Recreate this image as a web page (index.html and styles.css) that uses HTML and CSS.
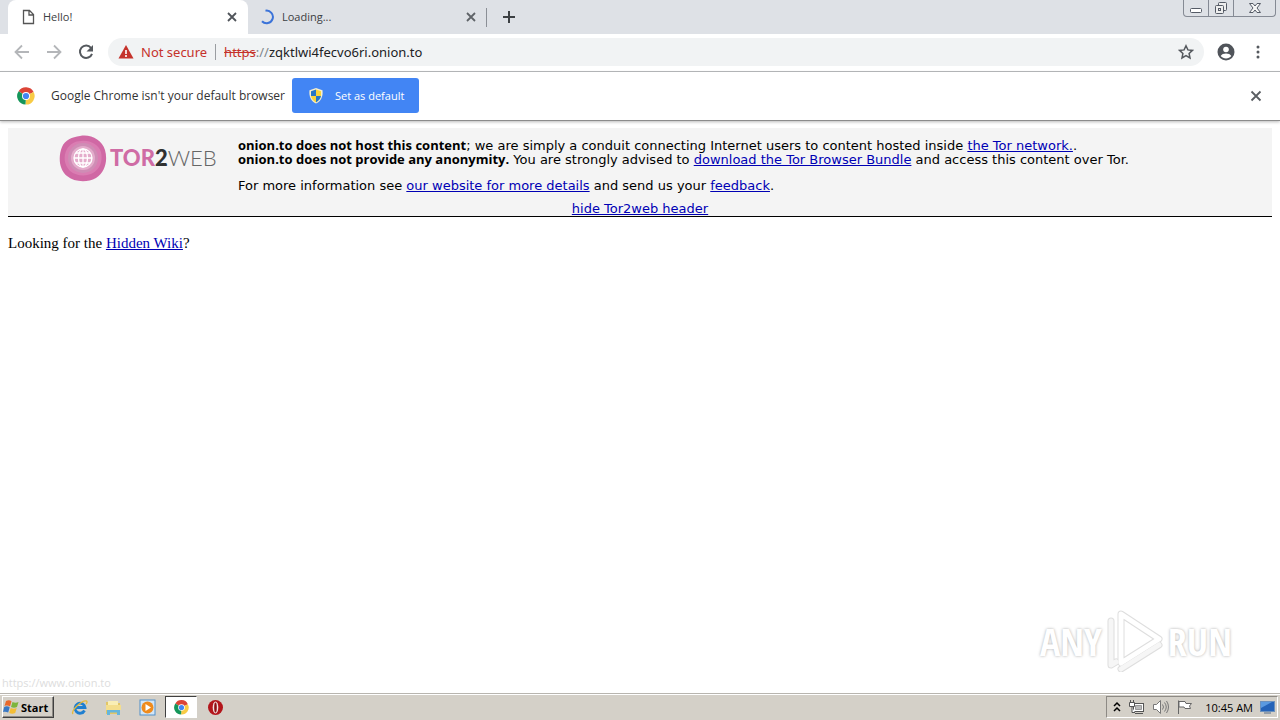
FILE: index.html
```html
<!DOCTYPE html>
<html lang="en">
<head>
<meta charset="utf-8">
<title>Hello!</title>
<link rel="stylesheet" href="styles.css">
</head>
<body>
<header class="tabstrip">
  <div class="tab tab-active">
    <svg class="tab-icon" viewBox="0 0 16 16" fill="none" stroke="#555" stroke-width="1.3"><path d="M3.5 1.5h6l4 4v9h-10zM9 1.5V6h4.500"/></svg>
    <span class="tab-title">Hello!</span>
    <button class="icon-button tab-close" aria-label="Close tab"><svg width="10" height="10" viewBox="0 0 10 10" stroke="#50545a" stroke-width="1.8"><path d="M1 1l8 8M9 1l-8 8"/></svg></button>
  </div>
  <div class="tab tab-idle">
    <svg class="tab-icon" viewBox="0 0 16 16" fill="none" stroke="#3b73d9" stroke-width="2"><path d="M6.500 1.700A6.300 6.300 0 1 1 3 12.200"/></svg>
    <span class="tab-title">Loading...</span>
    <button class="icon-button tab-close" aria-label="Close tab"><svg width="10" height="10" viewBox="0 0 10 10" stroke="#5f6368" stroke-width="1.8"><path d="M1 1l8 8M9 1l-8 8"/></svg></button>
  </div>
  <button class="icon-button new-tab" aria-label="New tab"><svg width="14" height="14" viewBox="0 0 14 14" stroke="#3c4043" stroke-width="2"><path d="M7 1v12M1 7h12"/></svg></button>
  <div class="window-controls">
    <button aria-label="Minimize"><svg width="14" height="16" viewBox="0 0 14 16" fill="#fff" stroke="#555b66"><rect x="1.500" y="8.500" width="11" height="4" rx="1"/></svg></button>
    <button aria-label="Restore"><svg width="14" height="16" viewBox="0 0 14 16" fill="#eee" stroke="#555b66"><rect x="4.500" y="2.500" width="8" height="8" rx="1"/><rect x="1.500" y="5.500" width="8" height="8" rx="1"/><rect x="4.500" y="8.500" width="2" height="2"/></svg></button>
    <button class="window-close" aria-label="Close"><svg width="14" height="16" viewBox="0 0 14 16" fill="#f6f6f6" stroke="#555b66"><path d="M1.500 3.500h3.500l2 2.500 2-2.500h3.500L9 8l3.500 4.500H9L7 10l-2 2.500H1.500L5 8z"/></svg></button>
  </div>
</header>

<nav class="toolbar">
  <button class="icon-button" aria-label="Back"><svg width="16" height="16" viewBox="0 0 16 16" fill="none" stroke="#b4b6b9" stroke-width="1.8"><path d="M15 8H2M8 1.500L1.500 8 8 14.500"/></svg></button>
  <button class="icon-button" aria-label="Forward"><svg width="16" height="16" viewBox="0 0 16 16" fill="none" stroke="#b4b6b9" stroke-width="1.800"><path d="M1 8h13M8 1.500L14.500 8 8 14.500"/></svg></button>
  <button class="icon-button" aria-label="Reload"><svg width="16" height="16" viewBox="0 0 16 16"><path d="M13 3.800A6.200 6.200 0 1 0 14 9.800" fill="none" stroke="#55595e" stroke-width="2"/><path d="M15 1v6.500H8.500z" fill="#55595e"/></svg></button>
  <div class="omnibox">
    <svg width="16" height="14" viewBox="0 0 16 14"><path d="M8 0l7.500 13.500H.5z" fill="#c5322b"/><path d="M8 5v4M8 10v2" stroke="#fff" stroke-width="1.600"/></svg>
    <span class="not-secure">Not secure</span>
    <span class="url"><s>https</s><span class="url-sep">://</span>zqktlwi4fecvo6ri.onion.to</span>
    <button class="icon-button" aria-label="Bookmark this page"><svg width="16" height="16" viewBox="0 0 16 16" fill="none" stroke="#55595e" stroke-width="1.500"><path d="M8 1.800l1.900 4.100 4.500.5-3.300 3.100.9 4.500L8 11.700 4 14l.9-4.500L1.600 6.400l4.500-.5z"/></svg></button>
  </div>
  <button class="icon-button" aria-label="Profile"><svg width="18" height="18" viewBox="0 0 18 18"><circle cx="9" cy="9" r="8.500" fill="#50545a"/><circle cx="9" cy="6.500" r="2.800" fill="#fff"/><path d="M3.700 13c1.600-3.300 9-3.300 10.600 0-2.500 3.200-8.100 3.200-10.600 0z" fill="#fff"/></svg></button>
  <button class="icon-button menu" aria-label="Menu"><svg width="4" height="14" viewBox="0 0 4 14" fill="#55595e"><circle cx="2" cy="2" r="1.500"/><circle cx="2" cy="7" r="1.500"/><circle cx="2" cy="12" r="1.500"/></svg></button>
</nav>

<section class="infobar">
  <svg width="18" height="18" viewBox="0 0 18 18"><path d="M9 9L1.600 4.300A8.500 8.500 0 0 1 16.600 5z" fill="#dc4437"/><path d="M9 9l7.600-4A8.500 8.500 0 0 1 8.500 17.500z" fill="#f8cb45"/><path d="M9 9l-.5 8.500A8.500 8.500 0 0 1 1.600 4.300z" fill="#15965a"/><circle cx="9" cy="9" r="4" fill="#fff"/><circle cx="9" cy="9" r="3.100" fill="#4285f4"/></svg>
  <span class="infobar-text">Google Chrome isn't your default browser</span>
  <button class="set-default">
    <svg width="16" height="16" viewBox="0 0 16 16"><path d="M8 0l6.500 2.200c.6 6-1 10.500-6.500 13.300C2.500 12.700.9 8.200 1.500 2.200z" fill="#f6efcf"/><path d="M8 1.500L3 3.200V8h5z" fill="#2677c5"/><path d="M8 1.500l5 1.700V8H8z" fill="#f8d43a"/><path d="M3 8h5v6.400C5 12.500 3.300 10.500 3 8z" fill="#f8d43a"/><path d="M13 8H8v6.400c3-1.900 4.700-3.900 5-6.400z" fill="#2677c5"/></svg>
    Set as default
  </button>
  <button class="icon-button infobar-close" aria-label="Dismiss"><svg width="12" height="12" viewBox="0 0 12 12" stroke="#5a5e63" stroke-width="1.800"><path d="M1.500 1.500l9 9M10.500 1.500l-9 9"/></svg></button>
</section>

<main class="page">
  <section class="notice">
    <div class="notice-body">
      <svg class="logo" width="158" height="47" viewBox="0 0 158 47">
        <path d="M21 1c11-2 22 4 25 14 3 11 0 22-9 28-9 5-22 4-29-2C0 34-1 22 3 12 6 5 13 2 21 1z" fill="#d068a4"/>
        <path d="M22 6c9-1 17 3 20 11 2 9-1 17-8 21-7 4-17 3-23-2-6-6-7-15-3-22 3-5 8-8 14-8z" fill="#da7db2"/>
        <circle cx="24" cy="23" r="15" fill="#cf8db5"/><circle cx="24" cy="23" r="12" fill="#e4accb"/>
        <g fill="none" stroke="#fff" stroke-width="1.300"><circle cx="24" cy="23" r="9"/><ellipse cx="24" cy="23" rx="4.500" ry="9"/><path d="M24 14v18M15 23h18M17 18h14M17 28h14"/></g>
        <text class="logo-name" x="51" y="31"><tspan class="logo-tor">TOR</tspan><tspan class="logo-two">2</tspan><tspan class="logo-web">WEB</tspan></text>
      </svg>
      <div class="notice-text">
        <p><b>onion.to does not host this content</b>; we are simply a conduit connecting Internet users to content hosted inside <a href="#">the Tor network.</a>.<br><b>onion.to does not provide any anonymity.</b> You are strongly advised to <a href="#">download the Tor Browser Bundle</a> and access this content over Tor.</p>
        <p>For more information see <a href="#">our website for more details</a> and send us your <a href="#">feedback</a>.</p>
      </div>
    </div>
    <a class="hide-link" href="#">hide Tor2web header</a>
  </section>
  <p class="question">Looking for the <a href="#">Hidden Wiki</a>?</p>
  <div class="status">https://www.onion.to</div>
  <div class="watermark">
    <span>ANY</span>
    <svg width="58" height="62" viewBox="0 0 58 62" fill="none" stroke-linejoin="round" stroke-linecap="round"><g stroke="#dedede" stroke-width="7"><path d="M15 4l38 25-38 24zM5 11v44l5-3M15 59l38-24"/></g><g stroke="#fff" stroke-width="5"><path d="M15 4l38 25-38 24z"/><path d="M5 11v44l5-3M15 59l38-24" stroke="#f6f6f6"/></g></svg>
    <span>RUN</span>
  </div>
</main>

<footer class="taskbar">
  <button class="start"><svg width="17" height="16" viewBox="0 0 17 16"><path d="M3 2c2-1 4-1 5.500.3L7 7.500C5.500 6.300 3.500 6.300 1.500 7z" fill="#e9692c"/><path d="M9.500 3c2 1 4 1 6 0L14 8c-2 1-4 1-6 0z" fill="#7db53c"/><path d="M1.200 8c2-1 4-.8 5.500.3L5.200 13.500c-2-1-3.500-1-5.200-.5z" fill="#3978c4"/><path d="M7.700 9c2 1 4 1 6 0l-1.500 5c-2 1-4 1-6 0z" fill="#f3bd35"/></svg>Start</button>
  <div class="launchers">
    <button class="launcher" aria-label="Internet Explorer"><svg width="17" height="17" viewBox="0 0 17 17" fill="none"><path d="M13.500 11.500A5 5 0 1 1 14 8.500H4.500" stroke="#1f7fd0" stroke-width="2.800"/><path d="M2 15C-1 12 11 1 15.500 2c1 .5.500 2-.5 3" stroke="#e6b93a" stroke-width="1.300"/></svg></button>
    <button class="launcher" aria-label="File Explorer"><svg width="17" height="17" viewBox="0 0 17 17"><path d="M1 3h5l1 1h8v11H1z" fill="#e2c667"/><path d="M3 2h10v5H3z" fill="#f9eeb5"/><path d="M1 6h15v5H1z" fill="#f4de8d"/><path d="M2 16v-5h13v5h-3v-2.500H5V16z" fill="#65b5dc"/></svg></button>
    <button class="launcher" aria-label="Media Player"><svg width="17" height="17" viewBox="0 0 17 17"><rect x="1" y="1" width="15" height="15" fill="#d3e6f7" stroke="#5190c9"/><circle cx="8.500" cy="8.500" r="6" fill="#ef8b1d"/><path d="M6.500 5l5.500 3.500L6.500 12z" fill="#fff"/></svg></button>
    <button class="launcher launcher-active" aria-label="Google Chrome"><svg width="15" height="15" viewBox="0 0 18 18"><path d="M9 9L1.600 4.300A8.500 8.500 0 0 1 16.600 5z" fill="#dc4437"/><path d="M9 9l7.600-4A8.500 8.500 0 0 1 8.500 17.500z" fill="#f8cb45"/><path d="M9 9l-.5 8.500A8.500 8.500 0 0 1 1.600 4.300z" fill="#15965a"/><circle cx="9" cy="9" r="4" fill="#fff"/><circle cx="9" cy="9" r="3.100" fill="#4285f4"/></svg></button>
    <button class="launcher" aria-label="Opera"><svg width="17" height="17" viewBox="0 0 17 17"><circle cx="8.500" cy="8.500" r="7.500" fill="#b3151b"/><ellipse cx="8.500" cy="8.500" rx="2.800" ry="6" fill="#f4e4e4"/><ellipse cx="8.500" cy="8.500" rx="1.300" ry="5" fill="#8e1014"/></svg></button>
  </div>
  <div class="tray">
    <svg width="8" height="12" viewBox="0 0 8 12" fill="none" stroke="#000" stroke-width="1.500"><path d="M1 5l3-3 3 3M1 10l3-3 3 3"/></svg>
    <svg width="17" height="16" viewBox="0 0 17 16" fill="#fff" stroke="#555"><rect x="5.500" y="4.500" width="10" height="8"/><path d="M7.500 6.500h6v4h-6z" fill="#bbb" stroke="#999"/><path d="M7 14.500h8M1.500 3.500h5v4h-5zM2.500 1v2M5.500 1v2M4 8v5.500h3"/></svg>
    <svg width="17" height="16" viewBox="0 0 17 16" fill="#fff" stroke="#777"><path d="M1.500 5.500h3l4-4v13l-4-4h-3z"/><path d="M10.500 5.500q2 2.500 0 5M12.500 3.500q3.500 4.500 0 9M14.500 2q4 6 0 12" fill="none"/></svg>
    <svg width="17" height="16" viewBox="0 0 17 16" fill="#fff" stroke="#666"><path d="M2.500 15V1.500M3 2.500h6l1 2h5.500l-2 2.500 1 2.500H9l-1-1.500H3z"/></svg>
    <span class="clock">10:45 AM</span>
    <svg width="15" height="14" viewBox="0 0 15 14"><rect x=".5" y="1.500" width="14" height="10" fill="#2563b8" stroke="#6c91bd"/><path d="M1 2h11L1 8z" fill="#5b9ae0"/><path d="M4 13h7" stroke="#526b88"/></svg>
  </div>
</footer>
</body>
</html>
```
FILE: styles.css
```css
* { box-sizing: border-box; }
body {
  margin: 0;
  min-height: 100vh;
  display: flex;
  flex-direction: column;
  background: #fff;
  color: #000;
  font-family: "Open Sans", "Noto Sans", sans-serif;
}
button {
  margin: 0;
  padding: 0;
  border: 0;
  background: none;
  font: inherit;
  color: inherit;
}
svg { display: block; flex: none; }
p { margin: 0; }
a { color: #0000b4; }

.icon-button { display: flex; align-items: center; justify-content: center; flex: none; }

.tabstrip { display: flex; height: 34px; padding-left: 8px; background: #dee1e6; }
.tab { display: flex; align-items: center; width: 240px; padding: 0 11px 0 12px; font-size: 11px; line-height: 14px; color: #3c4043; }
.tab-active { background: #fff; border-radius: 8px 8px 0 0; }
.tab-idle { width: 239px; padding-left: 11px; background: linear-gradient(#8b8f96, #8b8f96) right center / 1px 19px no-repeat; }
.tab-icon { width: 16px; height: 16px; }
.tab-title { flex: 1; margin-left: 7px; }
.tab-close { width: 10px; height: 16px; }
.new-tab { width: 44px; }
.window-controls { display: flex; height: 17px; margin-left: auto; margin-right: 4px; border: 1px solid #858a94; border-top: 0; border-radius: 0 0 4px 4px; }
.window-controls button { display: flex; align-items: center; justify-content: center; width: 25px; border-right: 1px solid #858a94; }
.window-controls .window-close { width: 41px; border-right: 0; }

.toolbar { display: flex; align-items: center; height: 38px; padding: 0 20px 2px 14px; gap: 16px; border-bottom: 1px solid #b0b2b5; }
.omnibox { display: flex; align-items: center; flex: 1; height: 28px; margin-left: -2px; margin-right: -3px; padding: 0 10px; border-radius: 14px; background: #f1f3f4; font-family: "Noto Sans", sans-serif; font-size: 13px; color: #202124; }
.not-secure { margin-left: 7px; padding-right: 8px; border-right: 1px solid #9a9da1; line-height: 16px; color: #c5322b; }
.url { flex: 1; margin-left: 8px; }
.url s { color: #c5322b; }
.url-sep { color: #80868b; }
.menu { margin-left: 5px; }

.infobar { display: flex; align-items: center; height: 49px; padding: 0 18px 1px 17px; border-bottom: 1px solid #8c8c8c; box-shadow: 0 1px 3px #bbb; font-size: 12px; color: #333; }
.infobar-text { margin-left: 16px; }
.set-default { display: flex; align-items: center; gap: 11px; width: 127px; height: 35px; margin-left: 7px; padding-left: 16px; border-radius: 3px; background: #4285f4; color: #fff; font-size: 11px; }
.infobar-close { margin-left: auto; }

.page { position: relative; flex: 1; padding: 7px 8px; }
.notice { display: flex; flex-direction: column; background: #f4f4f4; border-bottom: 1px solid #000; font: 13px/14px "DejaVu Sans", sans-serif; }
.notice b { font-family: "Open Sans", "Noto Sans", sans-serif; line-height: 1; }
.notice-body { display: flex; padding: 7px 0 0 51px; }
.notice-text { margin-left: 21px; padding-top: 4px; }
.notice-text p { margin-bottom: 12px; }
.notice-text p + p { margin-bottom: 9px; }
.hide-link { align-self: center; }
.logo-name { font: 22px Lato, sans-serif; }
.logo-tor { font-weight: 900; fill: #cf6ca5; }
.logo-two { font-weight: 900; fill: #303030; }
.logo-web { font-weight: 300; fill: #666; }
.question { margin-top: 16px; font: 15px/20px "Liberation Serif", serif; }
.status { position: absolute; left: 2px; bottom: 3px; font-size: 11px; line-height: 15px; color: #ddd; }
.watermark { position: absolute; right: 48px; bottom: 21px; display: flex; align-items: center; gap: 4px; font: 38px/62px "Liberation Sans Narrow", "Open Sans Condensed", "Roboto Condensed", "Liberation Sans", sans-serif; color: #fff; text-shadow: 0 0 3px #aaa; }

.taskbar { display: flex; align-items: center; height: 27px; padding: 2px; border-top: 1px solid #b8b5af; box-shadow: inset 0 1px #fff; background: #d4d0c8; font-size: 11px; }
.start { display: flex; align-items: center; gap: 1px; width: 52px; height: 22px; border: 1px solid; border-color: #fff #404040 #404040 #fff; box-shadow: inset -1px -1px #8d8a85; font-weight: 700; }
.launchers { display: flex; align-items: center; margin-left: 9px; gap: 2px; }
.launcher { display: flex; align-items: center; justify-content: center; width: 32px; height: 22px; }
.launcher-active { background: #fff; border: 1px solid; border-color: #404040 #fff #fff #404040; }
.tray { display: flex; align-items: center; gap: 7px; height: 22px; margin-left: auto; padding: 0 2px 0 6px; border: 1px solid; border-color: #8d8a85 #fff #fff #8d8a85; }
.clock { margin-left: 5px; }
```
